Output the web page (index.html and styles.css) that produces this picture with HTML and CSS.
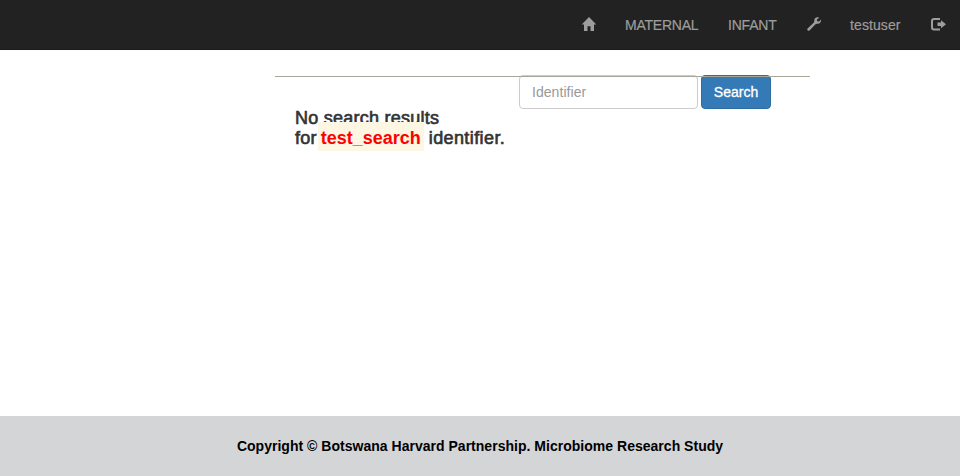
FILE: index.html
```html
<!DOCTYPE html>
<html lang="en">
<head>
<meta charset="utf-8">
<title>Microbiome Research Study</title>
<link rel="stylesheet" href="styles.css">
</head>
<body>
<nav class="navbar">
  <a class="nav-item" aria-label="Home"><svg class="icon home" viewBox="0 0 14 14"><path d="M7 0 14.300 7.600H12V14H8.500V9.200H5.500V14H2V7.600H-.3Z"/></svg></a>
  <a class="nav-item"><span class="maternal">MATERNAL</span></a>
  <a class="nav-item"><span class="infant">INFANT</span></a>
  <a class="nav-item" aria-label="Tools"><svg class="icon" viewBox="0 0 14 14"><path d="M12.2.7 9.900 2.500 10.200 4.200 12 4.500 13.900 2.400C14.400 5.100 12.500 7.200 10 6.800L8.500 7.200 2.500 13.400C1.300 14.700-.6 12.900.6 11.600L6.900 5.600 7.300 4.100C6.900 1.500 9.400-.5 12.200.7Z"/></svg></a>
  <a class="nav-item account"><span class="user">testuser</span></a>
  <a class="nav-item" aria-label="Log out"><svg class="icon logout" viewBox="0 0 15 14"><path d="M9 1H3A3 3 0 0 0 0 4V10.500A3 3 0 0 0 3 13.500H9V11.500H3.200A1.200 1.200 0 0 1 2 10.300V4.200A1.200 1.200 0 0 1 3.200 3H9ZM10 3.200 15 7.200 10 11.200V9H6.500V5.500H10Z"/></svg></a>
</nav>
<main class="content">
  <section class="results">
    <h4 class="message">No search results<br>for<span class="term">test_search</span><span class="tail">identifier.</span></h4>
    <form class="search">
      <input class="field" type="text" placeholder="Identifier">
      <button class="submit" type="button">Search</button>
    </form>
  </section>
</main>
<footer class="footer"><span class="copyright">Copyright © Botswana Harvard Partnership. Microbiome Research Study</span></footer>
</body>
</html>
```
FILE: styles.css
```css
* { box-sizing: border-box; }
body {
  margin: 0;
  height: 476px;
  display: flex;
  flex-direction: column;
  overflow: hidden;
  background: #fff;
  color: #333;
  font: 14px/20px "Liberation Sans", Arial, sans-serif;
}
.navbar {
  height: 50px;
  display: flex;
  justify-content: flex-end;
  background: #222;
  border-bottom: 1px solid #1b1b1b;
  color: #9d9d9d;
}
.nav-item { padding: 15px 15px 14px; display: flex; white-space: nowrap; -webkit-text-stroke: .2px #9d9d9d; }
.nav-item.account { padding-left: 14px; }
.nav-item:last-child { padding-right: 14px; }
.icon { width: 14px; height: 14px; margin-top: 2px; fill: currentColor; overflow: visible; }
.home { margin-right: -1px; }
.logout { width: 15px; }
.maternal { width: 73px; letter-spacing: -.24px; }
.infant { width: 49px; letter-spacing: -.2px; }
.user { width: 51px; letter-spacing: .1px; }
.content { flex: 1; padding: 25px 150px 0 275px; }
.results {
  position: relative;
  display: flex;
  align-items: flex-start;
  width: 535px;
  padding-left: 20px;
}
/* The section rule runs over the search controls. */
.results::after {
  content: "";
  position: absolute;
  top: 1px;
  left: 0;
  right: 0;
  height: 1px;
  background: #a8a699;
}
.message {
  width: 224px;
  margin: 33px 0 0;
  font-size: 18px;
  line-height: 20px;
  font-weight: 400;
  letter-spacing: .24px;
  white-space: nowrap;
  -webkit-text-stroke: .65px #333;
}
/* The highlight box is taller than its line and covers the line above. */
.term {
  position: relative;
  display: inline-block;
  width: 106px;
  margin: -6px 0 -3px 1px;
  padding: 6px 3px 3px;
  background: #fcf6e2;
  color: #f00;
  font-weight: 700;
  letter-spacing: 0;
  -webkit-text-stroke: 0;
}
.tail { margin-left: 5px; letter-spacing: .4px; }
.search { display: flex; gap: 4px; }
.field {
  width: 178.500px;
  height: 34px;
  padding: 6px 12px;
  border: 1px solid #ccc;
  border-radius: 4px;
  font: inherit;
  box-shadow: inset 0 1px 1px rgba(0, 0, 0, .075);
}
.field::placeholder { color: #999; opacity: 1; letter-spacing: .05px; }
.submit {
  width: 70px;
  height: 34px;
  margin-left: -.5px;
  padding: 0;
  border: 1px solid #2e6da4;
  border-radius: 4px;
  background: #337ab7;
  color: #fff;
  font: inherit;
  -webkit-text-stroke: .3px #fff;
}
.footer {
  height: 60px;
  padding-top: 20px;
  background: #d4d5d7;
  color: #000;
  text-align: center;
  font-weight: 700;
}
.copyright { white-space: nowrap; letter-spacing: .02px; }
```
